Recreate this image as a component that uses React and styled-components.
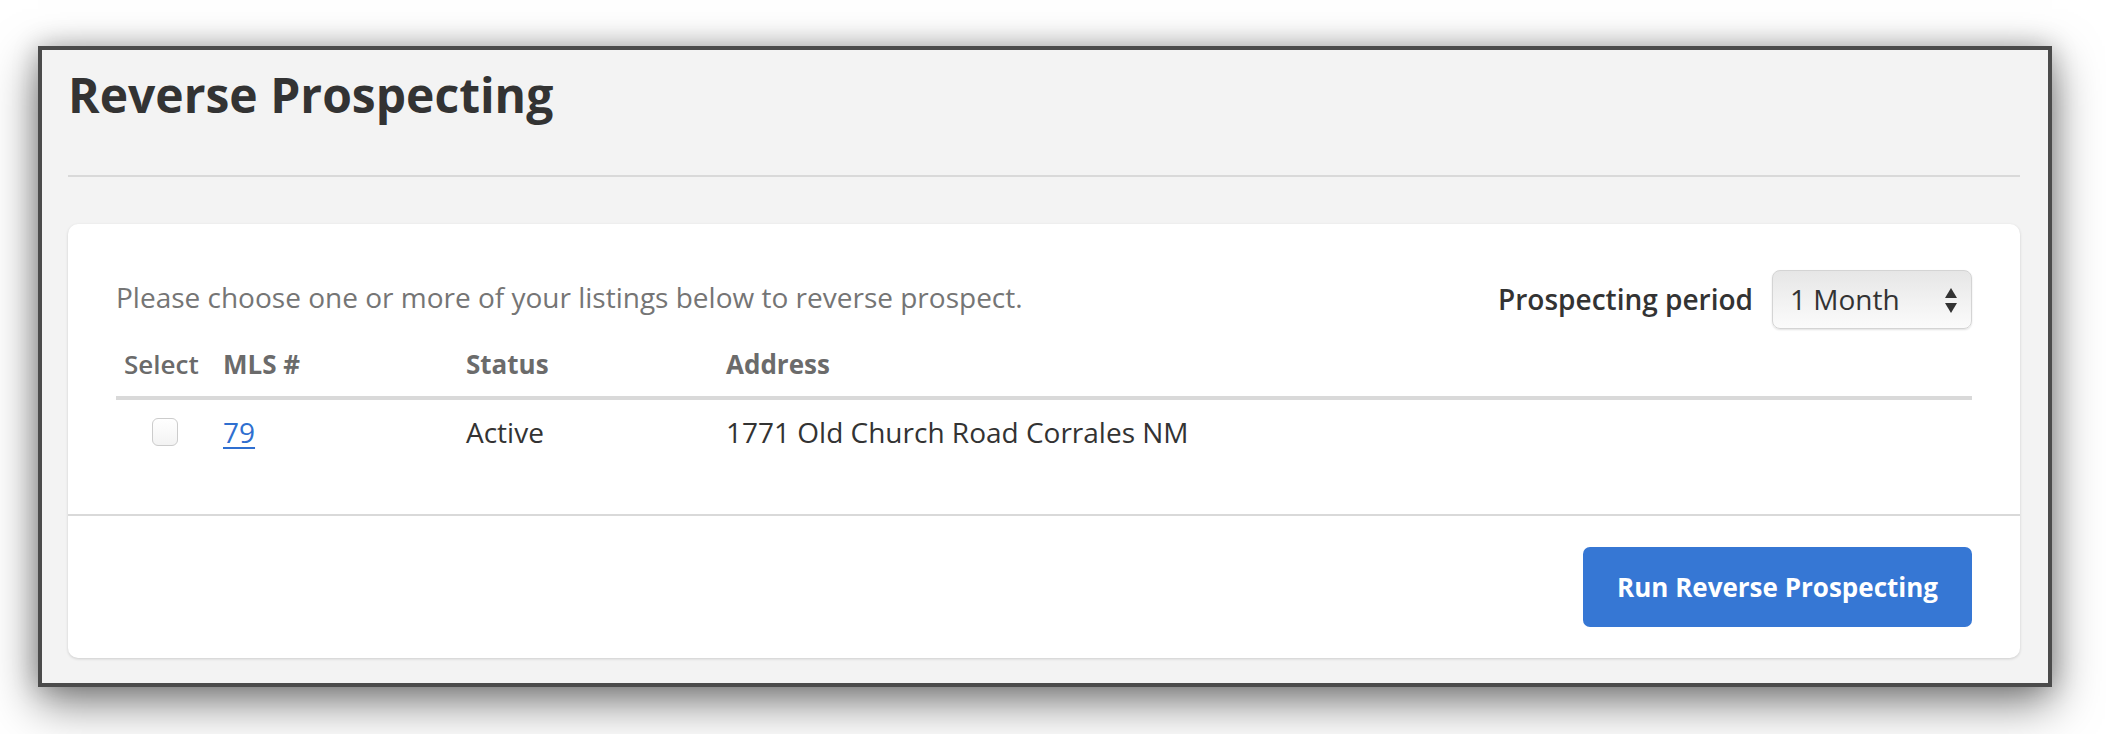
import React from "react";
import styled, { createGlobalStyle } from "styled-components";

const GlobalStyle = createGlobalStyle`
  html, body {
    margin: 0;
    padding: 0;
    background: #ffffff;
  }

  body {
    font-family: "Open Sans", "Noto Sans", Arial, sans-serif;
    color: #333333;
  }
`;

const Viewport = styled.div`
  box-sizing: border-box;
  min-height: 734px;
  padding: 46px 54px 0 38px;
  overflow: hidden;
`;

const Frame = styled.div`
  border: 4px solid #4b4b4b;
  background-color: #f3f3f3;
  box-shadow: 0 16px 44px rgba(0, 0, 0, 0.5), 0 0 24px rgba(0, 0, 0, 0.22);
  padding: 0 28px 25px 26px;
`;

const Title = styled.h1`
  margin: 0;
  padding-top: 16px;
  font-size: 48px;
  line-height: 1.2;
  font-weight: 700;
  color: #333333;
`;

const Rule = styled.hr`
  margin: 51px 0 47px;
  border: none;
  height: 2px;
  background-color: #d9d9d9;
`;

const Card = styled.div`
  background-color: #ffffff;
  border-radius: 10px;
  box-shadow: 0 1px 3px rgba(0, 0, 0, 0.16);
`;

const CardBody = styled.div`
  padding: 46px 48px 50px;
`;

const TopRow = styled.div`
  display: flex;
  align-items: center;
  justify-content: space-between;
`;

const Instruction = styled.p`
  margin: 0 0 4px;
  font-size: 28px;
  line-height: 1.4;
  color: #757575;
`;

const PeriodControl = styled.label`
  display: flex;
  align-items: center;
  gap: 19px;
  font-size: 28px;
  font-weight: 600;
  color: #333333;
`;

const SelectWrap = styled.div`
  position: relative;
  width: 200px;
  height: 59px;
`;

const Select = styled.select`
  appearance: none;
  width: 100%;
  height: 100%;
  padding: 0 40px 0 17px;
  border: 1px solid #d4d4d4;
  border-radius: 8px;
  background: linear-gradient(#e6e6e6, #f2f2f2 55%, #fbfbfb);
  box-shadow: 0 1px 2px rgba(0, 0, 0, 0.12);
  font-family: "Open Sans", Arial, sans-serif;
  font-size: 28px;
  color: #333333;
  outline: none;
`;

const Arrows = styled.svg`
  position: absolute;
  right: 15px;
  top: 18px;
  pointer-events: none;
`;

const Table = styled.table`
  width: 100%;
  margin-top: 12px;
  border-collapse: collapse;
  table-layout: fixed;
`;

const HeadCell = styled.th`
  width: ${({ $width }) => $width || "auto"};
  padding: 5px 8px 14px;
  border-bottom: 4px solid #d9d9d9;
  text-align: left;
  font-size: 26px;
  line-height: 1.4;
  font-weight: ${({ $light }) => ($light ? 600 : 700)};
  color: #6b6b6b;
`;

const Cell = styled.td`
  padding: 13px 8px 12px;
  vertical-align: top;
  font-size: 28px;
  line-height: 1.4;
  color: #333333;
`;

const Checkbox = styled.input`
  appearance: none;
  display: block;
  width: 26px;
  height: 28px;
  margin: 5px 0 0 28px;
  border: 1.5px solid #cccccc;
  border-radius: 6px;
  background: linear-gradient(#ffffff, #f3f3f3);
`;

const MlsLink = styled.a`
  color: #2f6fd0;
  text-decoration: underline;
  text-underline-offset: 4px;
`;

const Footer = styled.div`
  display: flex;
  justify-content: flex-end;
  padding: 31px 48px;
  border-top: 2px solid #d9d9d9;
`;

const RunButton = styled.button`
  height: 80px;
  padding: 0 34px;
  border: none;
  border-radius: 7px;
  background-color: #3677d4;
  color: #ffffff;
  font-family: "Open Sans", Arial, sans-serif;
  font-size: 26px;
  font-weight: 700;
`;

const listings = [
  { mls: "79", status: "Active", address: "1771 Old Church Road Corrales NM" }
];

export default function App() {
  return (
    <Viewport>
      <GlobalStyle />
      <Frame>
        <Title>Reverse Prospecting</Title>
        <Rule />
        <Card>
          <CardBody>
            <TopRow>
              <Instruction>
                Please choose one or more of your listings below to reverse
                prospect.
              </Instruction>
              <PeriodControl>
                Prospecting period
                <SelectWrap>
                  <Select defaultValue="1">
                    <option value="1">1 Month</option>
                    <option value="3">3 Months</option>
                    <option value="6">6 Months</option>
                  </Select>
                  <Arrows width="12" height="25" viewBox="0 0 12 25">
                    <path d="M6 0 L12 10 L0 10 Z" fill="#333" />
                    <path d="M0 15 L12 15 L6 25 Z" fill="#333" />
                  </Arrows>
                </SelectWrap>
              </PeriodControl>
            </TopRow>
            <Table>
              <thead>
                <tr>
                  <HeadCell $width="83px" $light>
                    Select
                  </HeadCell>
                  <HeadCell $width="227px">MLS #</HeadCell>
                  <HeadCell $width="244px">Status</HeadCell>
                  <HeadCell>Address</HeadCell>
                </tr>
              </thead>
              <tbody>
                {listings.map(listing => (
                  <tr key={listing.mls}>
                    <Cell>
                      <Checkbox type="checkbox" />
                    </Cell>
                    <Cell>
                      <MlsLink href="#">{listing.mls}</MlsLink>
                    </Cell>
                    <Cell>{listing.status}</Cell>
                    <Cell>{listing.address}</Cell>
                  </tr>
                ))}
              </tbody>
            </Table>
          </CardBody>
          <Footer>
            <RunButton type="button">Run Reverse Prospecting</RunButton>
          </Footer>
        </Card>
      </Frame>
    </Viewport>
  );
}
